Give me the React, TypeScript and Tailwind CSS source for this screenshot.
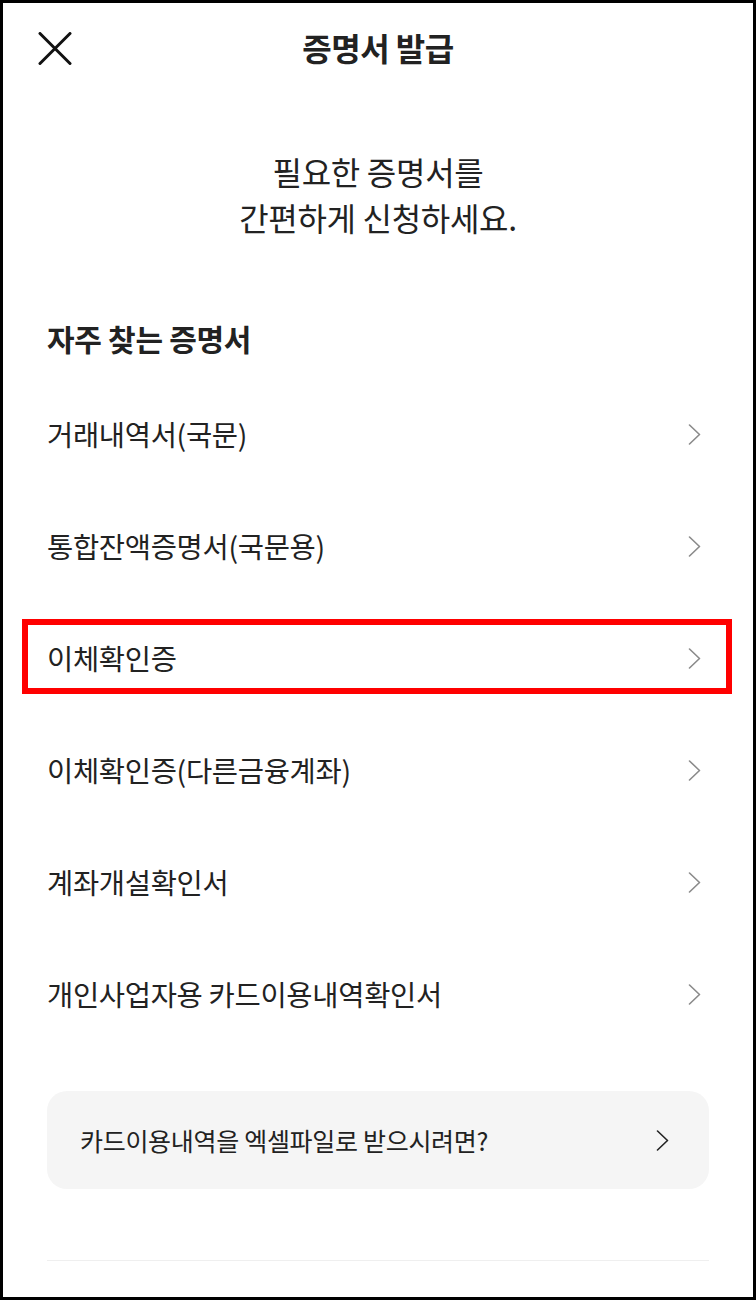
import React from "react";

const items = [
  "거래내역서(국문)",
  "통합잔액증명서(국문용)",
  "이체확인증",
  "이체확인증(다른금융계좌)",
  "계좌개설확인서",
  "개인사업자용 카드이용내역확인서",
];

function Chevron({ className }: { className: string }) {
  return (
    <svg className={className} width="13" height="21" viewBox="0 0 13 21" fill="none" stroke="currentColor" strokeWidth="1.6" strokeLinecap="round" strokeLinejoin="round">
      <path d="M1.5 1 L11.5 10.5 L1.5 20" />
    </svg>
  );
}

export default function App() {
  return (
    <div
      className="w-[756px] h-[1300px] border-[3px] border-black bg-white text-[#222] overflow-hidden"
      style={{ fontFamily: '"Noto Sans CJK KR", "Noto Sans", sans-serif' }}
    >
      {/* Header */}
      <div className="relative h-[88px] flex items-center justify-center">
        <button className="absolute left-[35px] top-[29px] w-[34px] h-[33px] flex items-center justify-center">
          <svg width="34" height="33" viewBox="0 0 34 33" fill="none" stroke="#111" strokeWidth="3" strokeLinecap="round">
            <path d="M2 1.5 L32 31.5 M32 1.5 L2 31.5" />
          </svg>
        </button>
        <h1 className="text-[32px] font-bold leading-none tracking-[-0.5px]">증명서 발급</h1>
      </div>

      {/* Intro */}
      <p className="mt-[57px] text-center text-[32px] leading-[46px] tracking-[-0.3px]">
        필요한 증명서를
        <br />
        간편하게 신청하세요.
      </p>

      <div className="px-[44px]">
        <h2 className="mt-[78px] text-[30px] font-bold leading-[40px] tracking-[-0.3px]">자주 찾는 증명서</h2>

        {/* List */}
        <ul className="mt-[20px]">
          {items.map((label, i) => (
            <li key={label} className="relative h-[112px] flex items-center justify-between">
              <span className="text-[28.5px] leading-none tracking-[-0.3px]">{label}</span>
              <Chevron className="mr-[8px] text-[#8a8a8a]" />
              {i === 2 && (
                <div className="absolute -left-[25px] -right-[23px] top-[17px] h-[75px] border-[6px] border-[#ff0000] pointer-events-none" />
              )}
            </li>
          ))}
        </ul>

        {/* Excel card */}
        <div className="mt-[41px] h-[98px] rounded-[20px] bg-[#f5f5f5] flex items-center justify-between pl-[33px] pr-[40px]">
          <span className="text-[25px] leading-none tracking-[-0.3px]">카드이용내역을 엑셀파일로 받으시려면?</span>
          <Chevron className="text-[#222]" />
        </div>

        <div className="mt-[71px] h-px bg-[#efefef]" />
      </div>
    </div>
  );
}
